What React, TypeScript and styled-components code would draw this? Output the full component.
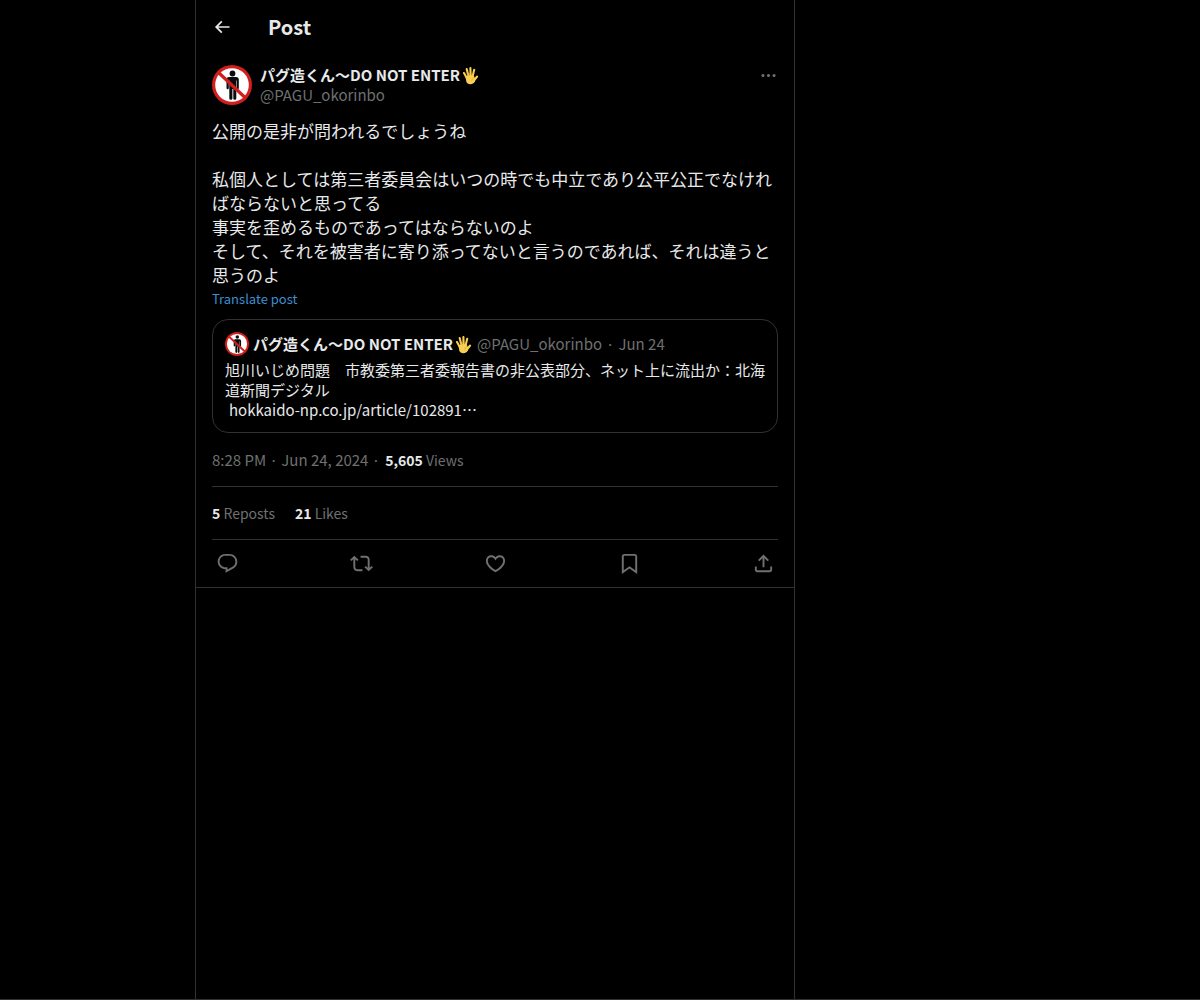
import React from "react";
import styled, { createGlobalStyle } from "styled-components";

const color = {
  text: "#e7e9ea",
  muted: "#6e7071",
  line: "#2f3133",
  link: "#3c8fd0",
};

const GlobalStyle = createGlobalStyle`
  *, *::before, *::after { box-sizing: border-box; }
  body {
    margin: 0;
    background: #000;
    color: ${color.text};
    font-family: "Noto Sans CJK JP", "Noto Sans", sans-serif;
    font-size: 15px;
    line-height: 20px;
  }
  button {
    font: inherit;
    color: inherit;
    background: none;
    border: 0;
    padding: 0;
    cursor: pointer;
  }
  a { color: inherit; text-decoration: none; }
  p, h1 { margin: 0; }
`;

const Page = styled.div`
  display: grid;
  grid-template-columns: minmax(0, 195px) minmax(0, 600px) 1fr;
  min-height: 100vh;
  border-bottom: 1px solid ${color.line};
`;

const Column = styled.main`
  grid-column: 2;
  border: solid ${color.line};
  border-width: 0 1px;
`;

const Header = styled.header`
  display: flex;
  align-items: center;
  height: 54px;
  padding: 0 16px;
`;

const BackButton = styled.button`
  display: flex;
  width: 56px;
`;

const Title = styled.h1`
  font-size: 20px;
  line-height: 24px;
  font-weight: 700;
`;

const Article = styled.article`
  padding: 11px 16px 0;
  border-bottom: 1px solid ${color.line};
`;

const AuthorRow = styled.div`
  display: flex;
  gap: 8px;
`;

const AuthorNames = styled.div`
  display: flex;
  flex: 1;
  flex-direction: column;
  min-width: 0;
`;

const Name = styled.a`
  display: inline-flex;
  align-items: center;
  font-weight: 700;
`;

const Muted = styled.span`
  color: ${color.muted};
`;

const Handle = styled.a`
  color: ${color.muted};
`;

const Strong = styled.strong`
  color: ${color.text};
  font-weight: 700;
`;

const MoreButton = styled.button`
  display: flex;
  align-items: center;
  height: 20px;
  color: ${color.muted};
`;

const Body = styled.p`
  margin-top: 14px;
  font-size: 17px;
  line-height: 24px;
  white-space: pre-wrap;
`;

const Translate = styled.button`
  display: block;
  color: ${color.link};
  font-size: 13px;
  line-height: 24px;
`;

const Quote = styled.section`
  margin-top: 8px;
  padding: 12px;
  border: 1px solid ${color.line};
  border-radius: 16px;
`;

const QuoteHead = styled.div`
  display: flex;
  flex-wrap: wrap;
  align-items: center;
  gap: 4px;
  margin-bottom: 4px;
`;

const QuoteLink = styled.a`
  display: block;
  padding-left: 4px;
`;

const Meta = styled.div`
  display: flex;
  gap: 5px;
  padding: 17px 0 16px;
  border-bottom: 1px solid ${color.line};
  color: ${color.muted};
`;

const Count = styled.span`
  font-size: 14px;
`;

const Counts = styled.div`
  display: flex;
  gap: 20px;
  padding: 16px 0;
  border-bottom: 1px solid ${color.line};
  color: ${color.muted};
`;

const Actions = styled.div`
  display: flex;
  justify-content: space-between;
  height: 47px;
`;

const ActionButton = styled.button`
  display: flex;
  align-items: center;
  justify-content: center;
  width: 30px;
  color: ${color.muted};
`;

const Svg = styled.svg<{ $size: number }>`
  display: block;
  flex: none;
  width: ${(p) => p.$size}px;
  height: ${(p) => p.$size}px;
  fill: currentColor;
`;

const paths = {
  back: "M7.414 13l5.043 5.04-1.414 1.42L3.586 12l7.457-7.46 1.414 1.42L7.414 11H21v2H7.414z",
  more: "M3 12c0-1.1.9-2 2-2s2 .9 2 2-.9 2-2 2-2-.9-2-2zm9 2c1.1 0 2-.9 2-2s-.9-2-2-2-2 .9-2 2 .9 2 2 2zm7 0c1.1 0 2-.9 2-2s-.9-2-2-2-2 .9-2 2 .9 2 2 2z",
  reply: "M1.751 10c0-4.42 3.584-8 8.005-8h4.366c4.49 0 8.129 3.64 8.129 8.13 0 2.96-1.607 5.68-4.196 7.11l-8.054 4.46v-3.69h-.067c-4.49.1-8.183-3.51-8.183-8.01zm8.005-6c-3.317 0-6.005 2.69-6.005 6 0 3.37 2.77 6.08 6.138 6.01l.351-.01h1.761v2.3l5.087-2.81c1.951-1.08 3.163-3.13 3.163-5.36 0-3.39-2.744-6.13-6.129-6.13H9.756z",
  repost: "M4.5 3.88l4.432 4.14-1.364 1.46L5.5 7.55V16c0 1.1.896 2 2 2H13v2H7.5c-2.209 0-4-1.79-4-4V7.55L1.432 9.48.068 8.02 4.5 3.88zM16.5 6H11V4h5.5c2.209 0 4 1.79 4 4v8.45l2.068-1.93 1.364 1.46-4.432 4.14-4.432-4.14 1.364-1.46 2.068 1.93V8c0-1.1-.896-2-2-2z",
  like: "M16.697 5.5c-1.222-.06-2.679.51-3.89 2.16l-.805 1.09-.806-1.09C9.984 6.01 8.526 5.44 7.304 5.5c-1.243.07-2.349.78-2.91 1.91-.552 1.12-.633 2.78.479 4.82 1.074 1.97 3.257 4.27 7.129 6.61 3.87-2.34 6.052-4.64 7.126-6.61 1.111-2.04 1.03-3.7.477-4.82-.561-1.13-1.666-1.84-2.908-1.91zm4.187 7.69c-1.351 2.48-4.001 5.12-8.379 7.67l-.503.3-.504-.3c-4.379-2.55-7.029-5.19-8.382-7.67-1.36-2.5-1.41-4.86-.514-6.67.887-1.79 2.647-2.91 4.601-3.01 1.651-.09 3.368.56 4.798 2.01 1.429-1.45 3.146-2.1 4.796-2.01 1.954.1 3.714 1.22 4.601 3.01.896 1.81.846 4.17-.514 6.67z",
  bookmark: "M4 4.5C4 3.12 5.119 2 6.5 2h11C18.881 2 20 3.12 20 4.5v18.44l-8-5.71-8 5.71V4.5zM6.5 4c-.276 0-.5.22-.5.5v14.56l6-4.29 6 4.29V4.5c0-.28-.224-.5-.5-.5h-11z",
  share: "M12 2.59l5.7 5.7-1.41 1.42L13 6.41V16h-2V6.41l-3.3 3.3-1.41-1.42L12 2.59zM21 15l-.02 3.51c0 1.38-1.12 2.49-2.5 2.49H5.5C4.11 21 3 19.88 3 18.5V15h2v3.5c0 .28.22.5.5.5h12.98c.28 0 .5-.22.5-.5L19 15h2z",
};

function Icon({ name, size = 23 }: { name: keyof typeof paths; size?: number }) {
  return (
    <Svg $size={size} viewBox="0 0 24 24" aria-hidden="true">
      <path d={paths[name]} />
    </Svg>
  );
}

function Avatar({ size }: { size: number }) {
  return (
    <Svg $size={size} viewBox="0 0 40 40" role="img" aria-label="No entry sign">
      <circle cx="20" cy="20" r="20" fill="#d01f1c" />
      <circle cx="20" cy="20" r="16.8" fill="#fff" />
      <g fill="#0b0b0b">
        <circle cx="20.500" cy="8.500" r="2.900" />
        <path d="M17 12h7q2.800 0 2.800 2.800V23q0 1.200-1 1.200t-1-1.200v-7.500h-.5V33.500q0 1.300-1.500 1.300T21.300 33.500V24h-.9v9.500q0 1.300-1.500 1.300T17.300 33.500V15.500h-.5V23q0 1.200-1.100 1.200T14.500 23v-8.200q0-2.800 2.500-2.800z" />
      </g>
      <path d="M7 8L33 32.500" stroke="#d01f1c" strokeWidth="3.200" />
    </Svg>
  );
}

function Hand() {
  return (
    <Svg $size={20} viewBox="-1 -1 20 20" role="img" aria-label="Raised hand">
      <g stroke="#f9d052" strokeLinecap="round" strokeLinejoin="round" fill="none" strokeWidth="2.100">
        <path d="M5.500 11.500L3 7M7.400 10L5.700 3M9.600 9.500L9.400 2M11.700 10L13.200 3.800" />
        <path d="M12.500 15L16 10.600" strokeWidth="2.300" />
      </g>
      <path
        d="M4.500 10.800Q8.500 8 12.700 9.400L14 12.500L13.800 15.500Q12.500 18.300 9.300 18.300Q6.200 18.300 5.300 15.500z"
        fill="#f9d052"
      />
      <path d="M12.800 11.600Q10.800 12.500 10.800 15M6.900 9.700l-.6-2.200M8.600 9.300l-.1-2.500M10.700 9.200l.4-2.200" stroke="#dd9a2e" strokeWidth=".6" fill="none" />
    </Svg>
  );
}

function AuthorName() {
  return (
    <Name href="#profile">
      パグ造くん〜DO NOT ENTER
      <Hand />
    </Name>
  );
}

const actions: { name: keyof typeof paths; label: string }[] = [
  { name: "reply", label: "Reply" },
  { name: "repost", label: "Repost" },
  { name: "like", label: "Like" },
  { name: "bookmark", label: "Bookmark" },
  { name: "share", label: "Share" },
];

const postText = `公開の是非が問われるでしょうね

私個人としては第三者委員会はいつの時でも中立であり公平公正でなければならないと思ってる
事実を歪めるものであってはならないのよ
そして、それを被害者に寄り添ってないと言うのであれば、それは違うと思うのよ`;

export default function App() {
  return (
    <>
      <GlobalStyle />
      <Page>
        <Column>
          <Header>
            <BackButton aria-label="Back">
              <Icon name="back" size={20} />
            </BackButton>
            <Title>Post</Title>
          </Header>
          <Article>
            <AuthorRow>
              <Avatar size={40} />
              <AuthorNames>
                <AuthorName />
                <Handle href="#profile">@PAGU_okorinbo</Handle>
              </AuthorNames>
              <MoreButton aria-label="More">
                <Icon name="more" size={19} />
              </MoreButton>
            </AuthorRow>
            <Body lang="ja">{postText}</Body>
            <Translate>Translate post</Translate>
            <Quote>
              <QuoteHead>
                <Avatar size={24} />
                <AuthorName />
                <Handle href="#profile">@PAGU_okorinbo</Handle>
                <Muted>·</Muted>
                <Muted>Jun 24</Muted>
              </QuoteHead>
              <p lang="ja">
                旭川いじめ問題　市教委第三者委報告書の非公表部分、ネット上に流出か：北海道新聞デジタル
              </p>
              <QuoteLink href="#article" lang="ja">
                hokkaido-np.co.jp/article/102891…
              </QuoteLink>
            </Quote>
            <Meta>
              <span>8:28 PM · Jun 24, 2024 ·</span>
              <Count>
                <Strong>5,605</Strong> Views
              </Count>
            </Meta>
            <Counts>
              <Count>
                <Strong>5</Strong> Reposts
              </Count>
              <Count>
                <Strong>21</Strong> Likes
              </Count>
            </Counts>
            <Actions>
              {actions.map((a) => (
                <ActionButton key={a.name} aria-label={a.label}>
                  <Icon name={a.name} />
                </ActionButton>
              ))}
            </Actions>
          </Article>
        </Column>
      </Page>
    </>
  );
}
